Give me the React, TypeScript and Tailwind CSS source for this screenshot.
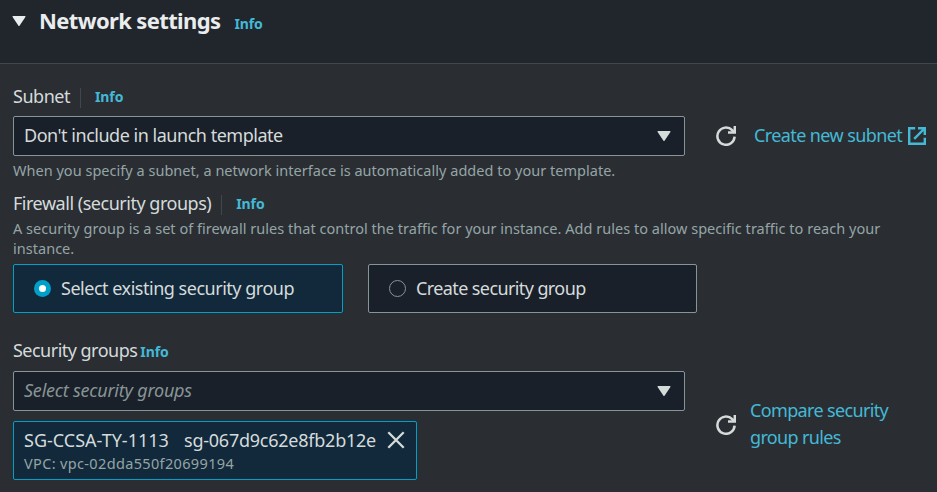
function Caret({ className }: { className: string }) {
  return (
    <svg viewBox="0 0 16 12" className={`h-3 w-4 shrink-0 ${className}`} fill="currentColor">
      <path d="M2.2 1h11.6a.7.7 0 0 1 .6 1.1L8.7 10.6a.85.85 0 0 1-1.4 0L1.6 2.1A.7.7 0 0 1 2.2 1z" />
    </svg>
  );
}

function Refresh() {
  return (
    <svg viewBox="0 0 20 20" className="size-5 shrink-0" fill="none" stroke="#d5dbdb" strokeWidth="2.5">
      <path d="M18.6 10.6A8.6 8.6 0 1 1 16.2 4.2L18.4 6.4" />
      <path d="M18.8 0v6.6H12" />
    </svg>
  );
}

function External() {
  return (
    <svg viewBox="0 0 18 18" className="size-[18px] shrink-0" fill="none" stroke="currentColor" strokeWidth="2.4">
      <path d="M7.2 1.2H1.2v15.6h15.6v-6" />
      <path d="M10 1.2h6.8V8M16.5 1.5L6.2 11.8" />
    </svg>
  );
}

function Info({ className = "" }: { className?: string }) {
  return <a className={`text-[14px] font-bold tracking-[-0.1px] text-[#44b9d6] ${className}`}>Info</a>;
}

function Select({ children }: { children: React.ReactNode }) {
  return (
    <div className="flex h-10 w-[672px] items-center justify-between rounded-[2px] border border-[#879596] bg-[#1a2029] pr-3 pl-[10px]">
      {children}
      <Caret className="text-[#d5dbdb]" />
    </div>
  );
}

export default function App() {
  return (
    <div className="flex h-[492px] w-[937px] flex-col overflow-hidden whitespace-nowrap bg-[#2a2e33] font-['Noto_Sans',sans-serif] text-[18px] tracking-[-0.48px] text-[#d5dbdb]">
      <header className="flex h-16 shrink-0 border-b border-[#414750] bg-[#21252c] pl-[11px] text-[#eaeded]">
        <Caret className="mt-[15px]" />
        <h2 className="ml-3 h-11 text-[22px] leading-[40px] font-bold tracking-[-0.63px]">Network settings</h2>
        <Info className="ml-[14px] leading-[48px]" />
      </header>

      <main className="flex flex-col pl-[13px]">
        <div className="mt-[21px] flex h-[22px] items-center">
          <span>Subnet</span>
          <span className="mt-[4px] ml-[10px] h-5 w-px bg-[#414750]" />
          <Info className="mt-px ml-[14px]" />
        </div>
        <div className="mt-[9px] flex items-center">
          <Select>
            <span className="-mt-[2px]">Don't include in launch template</span>
          </Select>
          <span className="ml-[31px] flex">
            <Refresh />
          </span>
          <a className="-mt-[2px] ml-[18px] flex items-center text-[#44b9d6]">
            <span className="tracking-[-0.6px]">Create new subnet</span>
            <span className="mt-[2px] ml-[6px]">
              <External />
            </span>
          </a>
        </div>
        <p className="mt-[4px] h-5 text-[14.5px] leading-5 tracking-[0.02px] text-[#95a5a6]">
          When you specify a subnet, a network interface is automatically added to your template.
        </p>

        <div className="mt-[12px] flex h-[22px] items-center">
          <span>Firewall (security groups)</span>
          <span className="mt-[4px] ml-[10px] h-5 w-px bg-[#414750]" />
          <Info className="mt-px ml-[14px]" />
        </div>
        <p className="mt-1 text-[14.5px] leading-5 tracking-[0.025px] text-[#95a5a6]">
          A security group is a set of firewall rules that control the traffic for your instance. Add rules to allow specific traffic to reach your
          <br />
          instance.
        </p>

        <div className="mt-[6px] flex gap-[25px]">
          <div className="flex h-[49px] w-[330px] items-center rounded-[2px] border border-[#00a1c9] bg-[#12293b] pl-5">
            <span className="flex size-[17px] items-center justify-center rounded-full bg-[#00a1c9]">
              <span className="size-[7px] rounded-full bg-white" />
            </span>
            <span className="ml-[10px]">Select existing security group</span>
          </div>
          <div className="flex h-[49px] w-[329px] items-center rounded-[2px] border border-[#879596] bg-[#1a2029] pl-5">
            <span className="size-[17px] rounded-full border border-[#879596]" />
            <span className="ml-[10px] tracking-[-0.6px]">Create security group</span>
          </div>
        </div>

        <div className="mt-[26px] flex h-[22px] items-center">
          <span className="tracking-[-0.52px]">Security groups</span>
          <Info className="ml-[3px] pt-[2px]" />
        </div>
        <div className="mt-[10px] flex">
          <div className="flex flex-col gap-[10px]">
            <Select>
              <span className="-mt-[2px] tracking-[-0.22px] text-[#879596] italic">Select security groups</span>
            </Select>
            <div className="flex h-[59px] w-[404px] rounded-[2px] border border-[#00a1c9] bg-[#12293b] pl-[10px]">
              <div className="flex flex-col">
                <div className="mt-[7px] flex h-[22px] items-center">
                  <span className="w-[160px] tracking-[0px]">SG-CCSA-TY-1113</span>
                  <span className="w-[192px] tracking-[-0.24px]">sg-067d9c62e8fb2b12e</span>
                </div>
                <span className="mt-[2px] h-5 text-[14.5px] leading-5 tracking-[0.35px] text-[#95a5a6]">VPC: vpc-02dda550f20699194</span>
              </div>
              <svg viewBox="0 0 18 18" className="mt-[9px] ml-[11px] size-[18px]" stroke="#d5dbdb" strokeWidth="2.3">
                <path d="M1.3 1.3l15.4 15.4M16.7 1.3L1.3 16.7" />
              </svg>
            </div>
          </div>
          <span className="mt-[44px] ml-[31px]">
            <Refresh />
          </span>
          <a className="mt-[26px] ml-[14px] leading-[27px] tracking-[-0.65px] text-[#44b9d6]">
            Compare security
            <br />
            group rules
          </a>
        </div>
      </main>
    </div>
  );
}
